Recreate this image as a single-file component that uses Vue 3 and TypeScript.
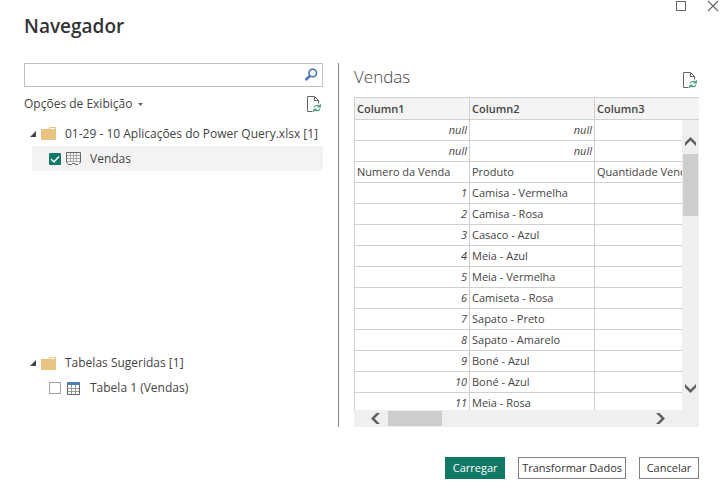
<script setup lang="ts">
import { computed, ref } from 'vue'

interface Item {
  id: string
  name: string
  kind: 'sheet' | 'table'
}

interface Group {
  name: string
  items: Item[]
}

type Cell = string | number | null

const groups: Group[] = [
  {
    name: '01-29 - 10 Aplicações do Power Query.xlsx',
    items: [{ id: 'vendas', name: 'Vendas', kind: 'sheet' }],
  },
  {
    name: 'Tabelas Sugeridas',
    items: [{ id: 'tabela-1', name: 'Tabela 1 (Vendas)', kind: 'table' }],
  },
]

const search = ref('')
const checked = ref<string[]>(['vendas'])
const active = ref('vendas')
const canLoad = computed(() => checked.value.length > 0)

const columns: string[] = ['Column1', 'Column2', 'Column3']
const products: string[] = [
  'Camisa - Vermelha',
  'Camisa - Rosa',
  'Casaco - Azul',
  'Meia - Azul',
  'Meia - Vermelha',
  'Camiseta - Rosa',
  'Sapato - Preto',
  'Sapato - Amarelo',
  'Boné - Azul',
  'Boné - Azul',
  'Meia - Rosa',
]
const rows: Cell[][] = [
  [null, null, ''],
  [null, null, ''],
  ['Numero da Venda', 'Produto', 'Quantidade Vend'],
  ...products.map((product, i): Cell[] => [i + 1, product, '']),
]

const isValue = (cell: Cell): boolean => typeof cell !== 'string'
</script>

<template>
  <main class="dialog">
    <header class="top">
      <div class="window-buttons">
        <button type="button" class="plain" aria-label="Maximizar">
          <svg width="12" height="12" viewBox="0 0 12 12"><rect x="1.5" y="1.5" width="9" height="9" fill="none" stroke="#666" /></svg>
        </button>
        <button type="button" class="plain" aria-label="Fechar">
          <svg width="12" height="12" viewBox="0 0 12 12"><path d="M1 1l10 10M11 1L1 11" stroke="#666" stroke-width="1.2" /></svg>
        </button>
      </div>
      <h1>Navegador</h1>
    </header>

    <div class="body">
      <section class="left">
        <div class="search">
          <input v-model="search" type="text" aria-label="Pesquisar" />
          <button type="button" class="plain" aria-label="Buscar">
            <svg width="14" height="14" viewBox="0 0 14 14" fill="none" stroke="#3f74b5">
              <circle cx="8.7" cy="5" r="3.8" stroke-width="1.6" />
              <path d="M6 7.9L1.5 12" stroke-width="2.4" />
            </svg>
          </button>
        </div>

        <div class="options">
          <button type="button" class="plain menu">
            Opções de Exibição
            <svg width="5" height="3" viewBox="0 0 5 3"><path d="M0 0h5L2.500 3z" fill="#666" /></svg>
          </button>
          <button type="button" class="plain" aria-label="Atualizar">
            <svg width="16" height="17" viewBox="0 0 16 17" fill="none">
              <path d="M6.500 15.500h-5v-15h7l4 4v3M8.500 .5v4h4" stroke="#666" />
              <path d="M8.200 11.200a3.200 2.600 0 0 1 5.400-.9M14.300 8.300v2.700h-2.800M14 12.800a3.200 2.600 0 0 1-5.400 1.100M7.800 16v-2.700h2.800" stroke="#4a9a80" stroke-width="1.200" />
            </svg>
          </button>
        </div>

        <div class="tree">
          <section v-for="group in groups" :key="group.name" class="group">
            <div class="folder">
              <svg class="arrow" width="6" height="6" viewBox="0 0 6 6"><path d="M6 0v6H0z" fill="#444" /></svg>
              <svg width="15" height="13" viewBox="0 0 15 13">
                <path d="M0 2h7.500l1-2H15v13H0z" fill="#e9c382" />
                <path d="M9 1.500h5" stroke="#fff" />
              </svg>
              <span>{{ group.name }} [{{ group.items.length }}]</span>
            </div>
            <label
              v-for="item in group.items"
              :key="item.id"
              class="item"
              :class="{ active: item.id === active }"
            >
              <span class="check">
                <input v-model="checked" type="checkbox" :value="item.id" />
                <svg v-if="checked.includes(item.id)" width="12" height="12" viewBox="0 0 12 12"><path d="M2 6l3 3 5-5.500" fill="none" stroke="#fff" stroke-width="1.500" /></svg>
              </span>
              <svg v-if="item.kind === 'sheet'" class="kind" width="15" height="13" viewBox="0 0 15 13" fill="none">
                <path d="M1 3.500h13M1 6.500h13M1 9.500h13M4.500 1v9M7.500 1v9M10.500 1v9" stroke="#aaa" />
                <path d="M.5 10.500V.5h14v10M.5 10.500l1.500 1M14.500 10.500l-1.500 1M2 12.500h4M6 11.500h3M9 12.500h3" stroke="#666" />
              </svg>
              <svg v-else class="kind" width="15" height="13" viewBox="0 0 15 13" fill="none">
                <path d="M1.500 6.500h12M1.500 9.500h12M5.500 3v9M9.500 3v9" stroke="#999" />
                <path d="M1.500 3v9.500h12V3" stroke="#666" />
                <path d="M1 0h13v3H1z" fill="#4a7ebb" />
              </svg>
              <span>{{ item.name }}</span>
            </label>
          </section>
        </div>
      </section>

      <section class="right">
        <div class="preview-head">
          <h2>Vendas</h2>
          <button type="button" class="plain" aria-label="Atualizar visualização">
            <svg width="16" height="17" viewBox="0 0 16 17" fill="none">
              <path d="M6.500 15.500h-5v-15h7l4 4v3M8.500 .5v4h4" stroke="#666" />
              <path d="M8.200 11.200a3.200 2.600 0 0 1 5.400-.9M14.300 8.300v2.700h-2.800M14 12.800a3.200 2.600 0 0 1-5.400 1.100M7.800 16v-2.700h2.800" stroke="#4a9a80" stroke-width="1.200" />
            </svg>
          </button>
        </div>

        <div class="preview">
          <div class="viewport">
            <table>
              <thead>
                <tr>
                  <th v-for="column in columns" :key="column" scope="col">{{ column }}</th>
                </tr>
              </thead>
              <tbody>
                <tr v-for="(row, r) in rows" :key="r">
                  <td v-for="(cell, c) in row" :key="c" :class="{ value: isValue(cell) }">{{ cell === null ? 'null' : cell }}</td>
                </tr>
              </tbody>
            </table>
          </div>
          <div class="vbar">
            <button type="button" class="plain" aria-label="Rolar para cima">
              <svg width="11" height="9" viewBox="0 0 11 9"><path d="M0 5.500L5.500 0 11 5.500V9L5.500 3.600 0 9z" fill="#606060" /></svg>
            </button>
            <div class="thumb"></div>
            <button type="button" class="plain end" aria-label="Rolar para baixo">
              <svg width="11" height="9" viewBox="0 0 11 9"><path d="M0 3.500L5.500 9 11 3.500V0L5.500 5.400 0 0z" fill="#606060" /></svg>
            </button>
          </div>
          <div class="hbar">
            <button type="button" class="plain" aria-label="Rolar para a esquerda">
              <svg width="9" height="11" viewBox="0 0 9 11"><path d="M5.500 0L0 5.500 5.500 11H9L3.600 5.500 9 0z" fill="#606060" /></svg>
            </button>
            <div class="thumb"></div>
            <button type="button" class="plain end" aria-label="Rolar para a direita">
              <svg width="9" height="11" viewBox="0 0 9 11"><path d="M3.500 0L9 5.500 3.500 11H0L5.400 5.500 0 0z" fill="#606060" /></svg>
            </button>
          </div>
        </div>
      </section>
    </div>

    <footer class="actions">
      <button type="button" class="primary" :disabled="!canLoad">Carregar</button>
      <button type="button">Transformar Dados</button>
      <button type="button">Cancelar</button>
    </footer>
  </main>
</template>

<style>
body {
  margin: 0;
  background: #fff;
}
</style>

<style scoped>
* {
  box-sizing: border-box;
}

.dialog {
  display: flex;
  flex-direction: column;
  height: 100vh;
  min-height: 360px;
  color: #444;
  font-family: 'Open Sans', 'Noto Sans', sans-serif;
  font-size: 12px;
  line-height: 16px;
}

button,
input {
  margin: 0;
  font: inherit;
  color: inherit;
}

svg {
  display: block;
  flex: none;
}

.plain {
  display: flex;
  align-items: center;
  padding: 0;
  border: 0;
  background: none;
}

.window-buttons {
  display: flex;
  justify-content: flex-end;
  gap: 20px;
  height: 12px;
  padding-right: 1px;
}

h1 {
  margin: 0 0 23px;
  padding-left: 24px;
  color: #333;
  font-size: 19px;
  font-weight: 600;
  line-height: 28px;
}

.body {
  flex: 1;
  display: grid;
  grid-template-columns: minmax(0, 299fr) minmax(0, 361fr);
  grid-template-rows: minmax(0, 1fr);
  gap: 15px;
  min-height: 0;
  padding: 0 21px 0 24px;
}

.left {
  display: flex;
  flex-direction: column;
}

.search {
  display: flex;
  align-items: center;
  height: 24px;
  padding-right: 4px;
  border: 1px solid #c0c0c0;
}

.search input {
  flex: 1;
  min-width: 0;
  padding: 0 4px;
  border: 0;
  outline: 0;
  background: none;
}

.options,
.preview-head {
  display: flex;
  align-items: center;
  justify-content: space-between;
  height: 34px;
  padding-right: 1px;
}

.menu {
  gap: 6px;
}

.tree {
  flex: 1;
  display: grid;
  grid-template-rows: 3fr 1fr;
}

.folder {
  display: flex;
  align-items: center;
  gap: 9px;
  height: 25px;
  padding-left: 6px;
  white-space: nowrap;
}

.arrow {
  margin-right: -4px;
}

.item {
  display: flex;
  align-items: center;
  height: 25px;
  margin-left: 8px;
  padding-left: 17px;
}

.active {
  background: #f3f3f3;
}

.check {
  display: grid;
  place-items: center;
}

.check > * {
  grid-area: 1 / 1;
  pointer-events: none;
}

.check input {
  appearance: none;
  width: 12px;
  height: 12px;
  border: 1px solid #a0a0a0;
  background: #fff;
}

.check input:checked {
  border-color: #117865;
  border-radius: 1px;
  background: #117865;
}

.kind {
  margin: 0 9px 0 5px;
}

.right {
  display: flex;
  flex-direction: column;
  min-width: 0;
  padding-left: 15px;
  border-left: 1px solid #808080;
}

h2 {
  margin: 0;
  padding-bottom: 6px;
  font-size: 17px;
  font-weight: 300;
  line-height: 24px;
}

.preview {
  position: relative;
  flex: 1;
  display: flex;
  flex-direction: column;
  min-height: 0;
}

.viewport {
  flex: 1;
  min-height: 0;
  overflow: hidden;
  border-top: 1px solid #d0d0d0;
  border-left: 1px solid #d0d0d0;
}

table {
  width: 100%;
  border-collapse: separate;
  border-spacing: 0;
  table-layout: fixed;
  font-size: 11px;
}

th,
td {
  height: 21px;
  padding: 0 2px;
  overflow: hidden;
  border-right: 1px solid #d0d0d0;
  border-bottom: 1px solid #d0d0d0;
  text-align: left;
  white-space: nowrap;
}

th {
  width: 125px;
  height: 22px;
  background: #f4f4f4;
  font-weight: 600;
}

th:first-child {
  width: 115px;
}

th:last-child {
  width: auto;
}

th:last-child,
td:last-child {
  border-right: 0;
}

td.value {
  font-style: italic;
  text-align: right;
}

.vbar,
.hbar {
  display: flex;
  align-items: center;
  background: #efefef;
}

.vbar {
  position: absolute;
  top: 23px;
  right: 0;
  bottom: 17px;
  flex-direction: column;
  width: 17px;
  padding: 17px 1px;
}

.hbar {
  flex: none;
  height: 17px;
  padding: 1px 34px 1px 17px;
}

.thumb {
  background: #cdcdcd;
}

.vbar .thumb {
  width: 15px;
  height: 62px;
  margin-top: 8px;
}

.hbar .thumb {
  width: 54px;
  height: 15px;
  margin-left: 8px;
}

.vbar .end {
  margin-top: auto;
}

.hbar .end {
  margin-left: auto;
}

.actions {
  display: flex;
  justify-content: flex-end;
  gap: 13px;
  padding: 30px 21px 13px;
}

.actions button {
  min-width: 60px;
  height: 22px;
  padding: 0 3px;
  border: 1px solid #808080;
  background: #fff;
  color: #333;
  font-size: 11px;
  line-height: 16px;
}

.actions .primary {
  border-color: #117865;
  background: #117865;
  color: #fff;
}
</style>
